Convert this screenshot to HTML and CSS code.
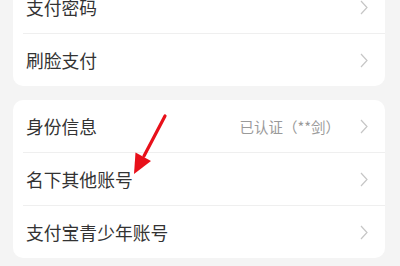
FILE: index.html
```html
<!DOCTYPE html>
<html lang="zh-CN">
<head>
<meta charset="utf-8">
<link rel="stylesheet" href="styles.css">
</head>
<body>
<div class="page">
  <div class="card card-top">
    <div class="row"><span class="label">支付密码</span><svg class="chev" viewBox="0 0 8 15"><polyline points="1,1 7,7.5 1,14"/></svg></div>
    <div class="row"><span class="label">刷脸支付</span><svg class="chev" viewBox="0 0 8 15"><polyline points="1,1 7,7.5 1,14"/></svg></div>
  </div>
  <div class="card">
    <div class="row"><span class="label">身份信息</span><span class="value">已认证（**剑）</span><svg class="chev" viewBox="0 0 8 15"><polyline points="1,1 7,7.5 1,14"/></svg></div>
    <div class="row"><span class="label">名下其他账号</span><svg class="chev" viewBox="0 0 8 15"><polyline points="1,1 7,7.5 1,14"/></svg></div>
    <div class="row"><span class="label">支付宝青少年账号</span><svg class="chev" viewBox="0 0 8 15"><polyline points="1,1 7,7.5 1,14"/></svg></div>
  </div>
</div>
<svg class="arrow" viewBox="0 0 400 266" width="400" height="266">
  <line x1="165" y1="116" x2="144" y2="156" stroke="#e8101a" stroke-width="3.2" stroke-linecap="round"/>
  <polygon points="135.5,152.5 151,161 134,174" fill="#e8101a"/>
</svg>
</body>
</html>
```
FILE: styles.css
```css
html, body {
  margin: 0;
  padding: 0;
  background: #f4f4f4;
}
body {
  width: 400px;
  height: 266px;
  overflow: hidden;
  position: relative;
  font-family: "Noto Sans CJK SC", "Noto Sans", sans-serif;
}
.page {
  display: flex;
  flex-direction: column;
  gap: 14px;
  padding: 0 15px 0 13px;
  margin-top: -19px;
}
.card {
  background: #fff;
  border-radius: 10px;
  display: flex;
  flex-direction: column;
}
.row {
  height: 52px;
  display: flex;
  align-items: center;
  padding: 0 17px 0 13px;
  position: relative;
}
.row + .row::before {
  content: "";
  position: absolute;
  left: 10px;
  right: 0;
  top: -1px;
  height: 1px;
  background: #efefef;
}
.row + .row {
  margin-top: 1px;
}
.label {
  flex: 1;
  font-size: 17.8px;
  color: #333;
  letter-spacing: 0;
}
.value {
  font-size: 14.5px;
  color: #9a9a9a;
  margin-right: 20px;
}
.chev {
  width: 8px;
  height: 15px;
  fill: none;
  stroke: #c6c6c6;
  stroke-width: 1.2;
}
.arrow {
  position: absolute;
  left: 0;
  top: 0;
  pointer-events: none;
}
```
